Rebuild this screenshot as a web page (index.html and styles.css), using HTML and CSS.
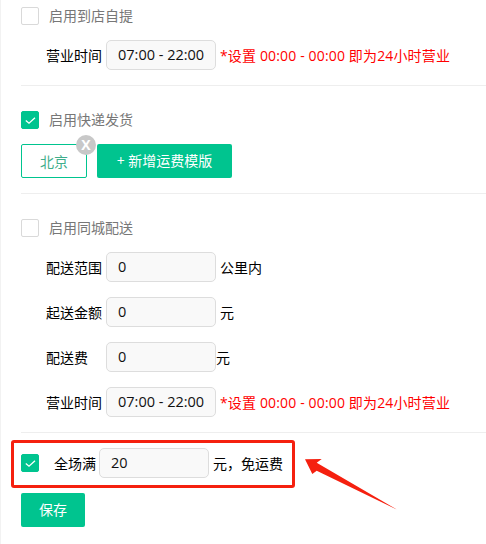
FILE: index.html
```html
<!DOCTYPE html>
<html lang="zh">
<head>
<meta charset="utf-8">
<title>配送设置</title>
<link rel="stylesheet" href="styles.css">
</head>
<body>
<main class="panel">
  <section class="block block-pickup">
    <label class="check-row"><span class="box"></span><span class="check-label">启用到店自提</span></label>
    <div class="field first-field"><span class="name">营业时间</span><span class="input">07:00 - 22:00</span><span class="hint">*设置 00:00 - 00:00 即为24小时营业</span></div>
  </section>
  <section class="block block-express">
    <label class="check-row"><span class="box on"><svg viewBox="0 0 18 18"><path d="M4.800 9.500 8 12.200 14 6.800"/></svg></span><span class="check-label">启用快递发货</span></label>
    <div class="templates">
      <span class="tag">北京<span class="close">X</span></span>
      <span class="btn add">+ 新增运费模版</span>
    </div>
  </section>
  <section class="block block-city">
    <label class="check-row"><span class="box"></span><span class="check-label">启用同城配送</span></label>
    <div class="field first-field"><span class="name">配送范围</span><span class="input">0</span><span class="unit">公里内</span></div>
    <div class="field"><span class="name">起送金额</span><span class="input">0</span><span class="unit">元</span></div>
    <div class="field"><span class="name">配送费</span><span class="input">0</span><span class="unit tight">元</span></div>
    <div class="field"><span class="name">营业时间</span><span class="input">07:00 - 22:00</span><span class="hint">*设置 00:00 - 00:00 即为24小时营业</span></div>
  </section>
  <div class="free-row"><span class="box on"><svg viewBox="0 0 18 18"><path d="M4.800 9.500 8 12.200 14 6.800"/></svg></span><span class="free-name">全场满</span><span class="input">20</span><span class="unit">元，免运费</span></div>
  <span class="btn save">保存</span>
</main>
<div class="callout"></div>
<svg class="arrow" viewBox="0 0 95 54"><path d="M1 1.300 17.700 1 12.700 4.700 93.700 52 12.700 12.700 8.300 16Z"/></svg>
</body>
</html>
```
FILE: styles.css
```css
* { box-sizing: border-box; }
html, body { margin: 0; padding: 0; }
body {
  width: 486px;
  height: 544px;
  overflow: hidden;
  position: relative;
  background: #fff;
  color: #000;
  font: 14px/20px "Open Sans", "Noto Sans CJK SC", sans-serif;
}
.panel {
  height: 544px;
  padding-left: 20px;
  border-left: 1px solid #f2f2f2;
}
.block { border-bottom: 1px solid #eee; }
.block-pickup { height: 86px; padding-top: 7px; }
.block-express { height: 108px; padding-top: 25px; }
.block-city { height: 239px; padding-top: 25px; }
.check-row { display: flex; align-items: center; height: 18px; }
.box {
  width: 18px;
  height: 18px;
  flex: none;
  border: 1px solid #d9d9d9;
  border-radius: 2px;
  background: #fff;
}
.box.on { background: #00c48f; border-color: #00c48f; }
.box svg { display: block; width: 18px; height: 18px; margin: -1px; fill: none; stroke: #fff; stroke-width: 1.3; }
.check-label { margin-left: 10px; color: #777; }
.field { display: flex; align-items: center; height: 30px; margin-top: 15px; padding-left: 25px; }
.name { width: 60px; padding-top: 2px; }
.input {
  width: 110px;
  height: 30px;
  flex: none;
  padding-left: 11px;
  border: 1px solid #ddd;
  border-radius: 5px;
  background: #f9f9f9;
  color: #111;
  font-size: 14.5px;
  line-height: 27px;
}
.unit { margin-left: 4px; padding-top: 2px; }
.unit.tight { margin-left: 0; }
.hint { margin-left: 4px; padding-top: 2px; color: #f00; white-space: nowrap; letter-spacing: .15px; }
.templates { display: flex; gap: 10px; margin-top: 15px; }
.tag {
  position: relative;
  width: 66px;
  height: 34px;
  border: 1px solid #00c48f;
  border-radius: 2px;
  color: #3fae8b;
  text-align: center;
  line-height: 33px;
}
.close {
  position: absolute;
  top: -10px;
  right: -10px;
  width: 20px;
  height: 20px;
  border-radius: 50%;
  background: #c8c8c8;
  color: #fff;
  font-weight: 700;
  font-size: 14px;
  line-height: 20px;
  text-align: center;
}
.btn {
  display: block;
  height: 34px;
  border-radius: 2px;
  background: #00c48f;
  color: #fff;
  text-align: center;
  line-height: 33px;
}
.add { width: 135px; }
.free-row { display: flex; align-items: center; height: 30px; margin-top: 15px; }
.free-name { margin-left: 15px; margin-right: 3px; width: 42px; padding-top: 2px; }
.save { width: 64px; margin-top: 15px; }
.callout {
  position: absolute;
  left: 11px;
  top: 440px;
  width: 284px;
  height: 48px;
  border: 3px solid #f5200f;
  border-radius: 3px;
}
.arrow {
  position: absolute;
  left: 304px;
  top: 458px;
  width: 95px;
  height: 54px;
  fill: #f5200f;
}
```
